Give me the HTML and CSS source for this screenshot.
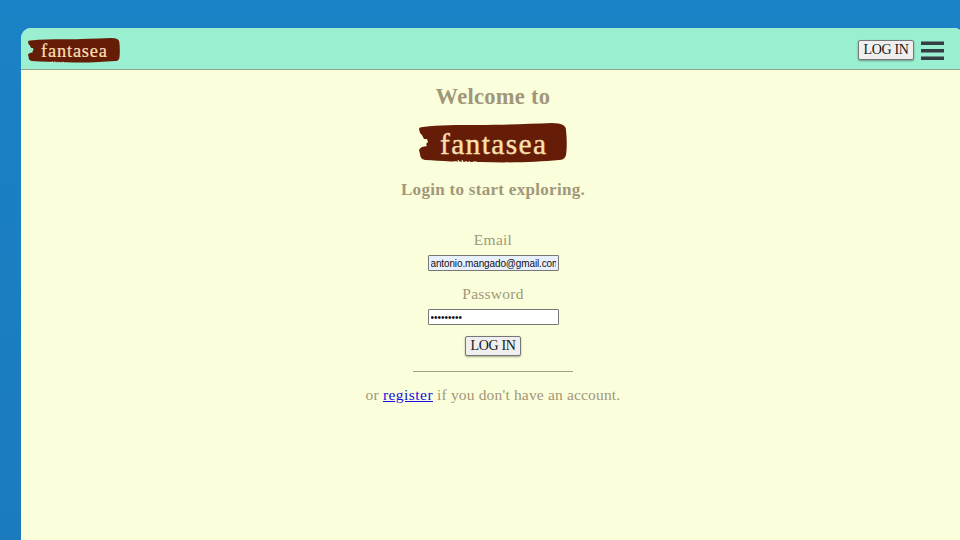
FILE: index.html
```html
<!DOCTYPE html>
<html lang="en">
<head>
<meta charset="utf-8">
<title>fantasea</title>
<link rel="stylesheet" href="styles.css">
</head>
<body>
<svg class="defs" width="0" height="0" aria-hidden="true">
  <symbol id="logo" viewBox="0 0 148 40">
    <path fill="#661d08" d="M0 6 Q0 4 4 4 C20 2 38 2 58 2 C85 2 108 1 133 0 Q147 0 147 7 C148 16 148 25 147 32 Q146 37 140 37 C118 39 90 40 62 39 C40 39 22 38 6 37 Q1 36 1 31 L0 27 Q1 25 3 24 L8 23 L7 21 L9 19 L8 16 L5 16 L3 12 L1 10Z"/>
    <path stroke="#fbfed9" stroke-width="1" fill="none" d="M35 39h3M39 37l1 2M43 37l1 3M47 38v2M50 38l1 2M54 39h4"/>
  </symbol>
</svg>
<div class="app">
  <header class="bar">
    <svg class="brand" viewBox="0 0 148 40"><use href="#logo"/><text x="21" y="30.5" textLength="106" class="logo-text">fantasea</text></svg>
    <div class="actions">
      <button class="login">LOG IN</button>
      <svg class="menu" width="23" height="19" viewBox="0 0 23 19"><path fill="#343d43" d="M0 .5h23v3.5H0zM0 8h23v3.5H0zM0 15.5h23V19H0z"/></svg>
    </div>
  </header>
  <main>
    <h1>Welcome to</h1>
    <svg class="hero" viewBox="0 0 148 40"><use href="#logo"/><text x="21" y="30.5" textLength="106" class="logo-text">fantasea</text></svg>
    <h2>Login to start exploring.</h2>
    <form>
      <label class="email-label" for="email">Email</label>
      <input id="email" class="email" type="text" value="antonio.mangado@gmail.com">
      <label class="pass-label" for="pass">Password</label>
      <input id="pass" type="password" value="fantasea1">
      <button class="login" type="button">LOG IN</button>
    </form>
    <p class="register"><span>or</span> <a href="#">register</a> <span>if you don't have an account.</span></p>
  </main>
</div>
</body>
</html>
```
FILE: styles.css
```css
* { box-sizing: border-box; }
body {
  margin: 0;
  height: 540px;
  overflow: hidden;
  padding: 28px 0 0 21px;
  background: linear-gradient(#1a82c6, #1b7bbd);
  font-family: "Liberation Serif", serif;
  color: #a0977b;
}
.defs { position: absolute; }
.app {
  width: 943px;
  height: 512px;
  border-radius: 10px 10px 0 0;
  overflow: hidden;
  background: #fbfeda;
}
.bar {
  height: 42px;
  padding: 0 20px 0 7px;
  display: flex;
  align-items: center;
  justify-content: space-between;
  background: #99efcf;
  border-bottom: 1px solid #8ea58e;
}
.brand { width: 92px; height: 25px; margin-top: 4px; overflow: visible; }
.logo-text { font-size: 29.5px; fill: #f9dfb0; stroke: #f9dfb0; stroke-width: .4px; }
.actions { display: flex; align-items: center; gap: 7px; margin-top: 4px; }
.bar .login { margin-top: -2px; }
.login {
  width: 56px;
  height: 20px;
  padding: 0;
  border: 1px solid #777;
  border-radius: 2px;
  background: #efefef;
  color: #171717;
  font: 14px/16px "Liberation Serif", serif;
  letter-spacing: -.3px;
  box-shadow: 0 1px 2px rgba(0, 0, 0, .35);
}
main { width: 944px; display: flex; flex-direction: column; align-items: center; }
h1 { margin: 13px 0 0; font-size: 22.5px; line-height: 28px; letter-spacing: .3px; }
.hero { width: 148px; height: 40px; margin-top: 12px; margin-right: 1px; overflow: visible; }
h2 { margin: 16px 0 0; font-size: 17px; line-height: 22px; letter-spacing: .3px; }
form {
  width: 160px;
  height: 142px;
  margin-top: 29px;
  display: flex;
  flex-direction: column;
  align-items: center;
  border-bottom: 1px solid #a0a188;
}
label { font-size: 15.5px; line-height: 20px; letter-spacing: .25px; }
.pass-label { margin-top: 13px; }
input {
  width: 131px;
  height: 16px;
  margin: 5px 0 0;
  padding: 0 2px;
  border: 1px solid #777;
  border-radius: 1px;
  background: #fff;
  color: #111;
  font: 10px/14px "Liberation Sans", sans-serif;
}
.email { background: #e8f0fe; letter-spacing: -.13px; }
form .login { margin-top: 11px; }
.register { margin: 13px 0 0; font-size: 15.5px; line-height: 20px; letter-spacing: .17px; }
a { color: #1710e0; letter-spacing: .45px; }
```
